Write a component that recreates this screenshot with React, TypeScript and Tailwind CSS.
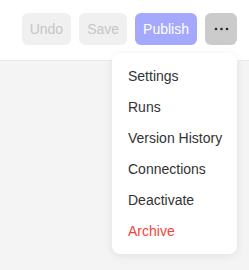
export default function App() {
  const items = ["Settings", "Runs", "Version History", "Connections", "Deactivate"];

  return (
    <div className="min-h-screen w-full bg-[#f4f4f5] font-['Liberation_Sans',Arial,sans-serif]">
      {/* Toolbar */}
      <header className="h-[61px] bg-white border-b border-[#ececec] flex items-start justify-end gap-2 pt-[13px] pr-3">
        <button className="h-8 px-2 rounded-md bg-[#f0f0f0] text-[14px] text-[#c6c6c6]">Undo</button>
        <button className="h-8 px-2 rounded-md bg-[#f0f0f0] text-[14px] text-[#c6c6c6]">Save</button>
        <button className="h-8 px-2 rounded-md bg-[#a5a9fd] text-[14px] text-white">Publish</button>
        <div className="relative">
          <button className="h-8 w-8 rounded-md bg-[#cbcbcb] flex items-center justify-center">
            <svg width="15" height="4" viewBox="0 0 15 4">
              <circle cx="2" cy="2" r="1.3" fill="#2a2a2a" />
              <circle cx="7.5" cy="2" r="1.3" fill="#2a2a2a" />
              <circle cx="13" cy="2" r="1.3" fill="#2a2a2a" />
            </svg>
          </button>

          {/* Dropdown menu */}
          <div className="absolute right-0 top-[40px] w-[125px] rounded-lg bg-white pt-2 pb-[7px] shadow-[0_2px_10px_rgba(0,0,0,0.08)] z-10">
            {items.map((label) => (
              <div key={label} className="h-[31px] flex items-center px-4 text-[14px] text-[#333333] whitespace-nowrap">
                {label}
              </div>
            ))}
            <div className="h-[31px] flex items-center px-4 text-[14px] text-[#f2443a]">Archive</div>
          </div>
        </div>
      </header>
    </div>
  );
}
